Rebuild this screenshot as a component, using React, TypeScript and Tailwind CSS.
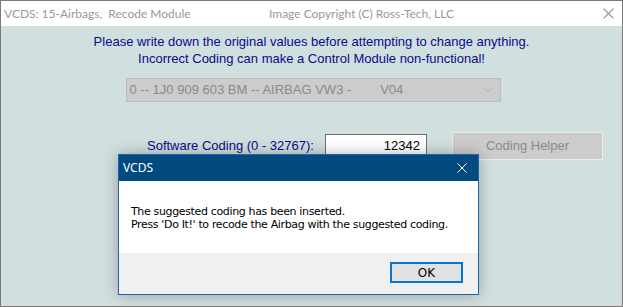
import React from 'react';

const Chevron = () => (
  <svg width="10" height="6" viewBox="0 0 10 6" fill="none">
    <path d="M0.5 0.5 L5 5 L9.5 0.5" stroke="#b0b0b0" strokeWidth="1" />
  </svg>
);

const CloseX = ({ color, size }: { color: string; size: number }) => (
  <svg width={size} height={size} viewBox="0 0 10 10" fill="none">
    <path d="M0.5 0.5 L9.5 9.5 M9.5 0.5 L0.5 9.5" stroke={color} strokeWidth="1" />
  </svg>
);

export default function App() {
  return (
    <div className="relative w-[623px] h-[307px] flex flex-col bg-[#d1dfdf] border border-[#7a7a7a] overflow-hidden">
      {/* Title bar */}
      <div className="h-[25px] bg-white flex items-center pl-[3px] pr-[8px] text-[12px] text-[#999999] font-['Lato',sans-serif]">
        <span className="w-[265px] whitespace-pre">VCDS: 15-Airbags,  Recode Module</span>
        <span className="flex-1">Image Copyright (C) Ross-Tech, LLC</span>
        <CloseX color="#8a8a8a" size={11} />
      </div>

      {/* Body */}
      <div className="flex-1 flex flex-col items-center font-['Liberation_Sans',Arial,sans-serif]">
        <div className="mt-[7px] text-[#0a0a8c] text-[13px] leading-[17px] text-center">
          <div>Please write down the original values before attempting to change anything.</div>
          <div>Incorrect Coding can make a Control Module non-functional!</div>
        </div>

        <div className="mt-[11px] w-[375px] h-[24px] ml-[3px] bg-[#cccccc] border border-[#bdbdbd] flex items-center justify-between pl-[3px] pr-[7px] text-[13px] text-[#8a8a8a]">
          <span className="whitespace-pre">0 -- 1J0 909 603 BM -- AIRBAG VW3 -        V04</span>
          <Chevron />
        </div>

        <div className="mt-[30px] w-full flex items-center pl-[146px]">
          <span className="text-[13px] text-[#0a0a8c] w-[178px]">Software Coding (0 - 32767):</span>
          <div className="w-[102px] h-[24px] bg-white border border-[#6e6e6e] flex items-center justify-end pr-[6px] text-[13px] text-black">
            12342
          </div>
          <div className="ml-[25px] w-[151px] h-[28px] bg-[#cccccc] border border-[#ebebeb] flex items-center justify-center text-[13px] text-[#8a8a8a]">
            Coding Helper
          </div>
        </div>
      </div>

      {/* Message box */}
      <div className="absolute left-[117px] top-[153px] w-[361px] h-[141px] flex flex-col border border-[#1e64aa] bg-white shadow-[0_0_14px_rgba(0,0,0,0.28)]">
        <div className="h-[26px] bg-[#014a80] flex items-center justify-between pl-[4px] pr-[11px] text-white text-[12px] font-['Noto_Sans',sans-serif]">
          <span>VCDS</span>
          <CloseX color="#ffffff" size={10} />
        </div>
        <div className="h-[72px] bg-white pl-[12px] pt-[24px] text-[11px] leading-[13px] text-black font-['DejaVu_Sans',sans-serif] tracking-[-0.35px]">
          <div>The suggested coding has been inserted.</div>
          <div>Press 'Do It!' to recode the Airbag with the suggested coding.</div>
        </div>
        <div className="flex-1 bg-[#f0f0f0] flex justify-end items-start pt-[9px] pr-[15px]">
          <div className="w-[73px] h-[21px] bg-[#e1e1e1] border-2 border-[#0078d7] flex items-center justify-center text-[12px] text-black font-['DejaVu_Sans',sans-serif]">
            OK
          </div>
        </div>
      </div>
    </div>
  );
}
